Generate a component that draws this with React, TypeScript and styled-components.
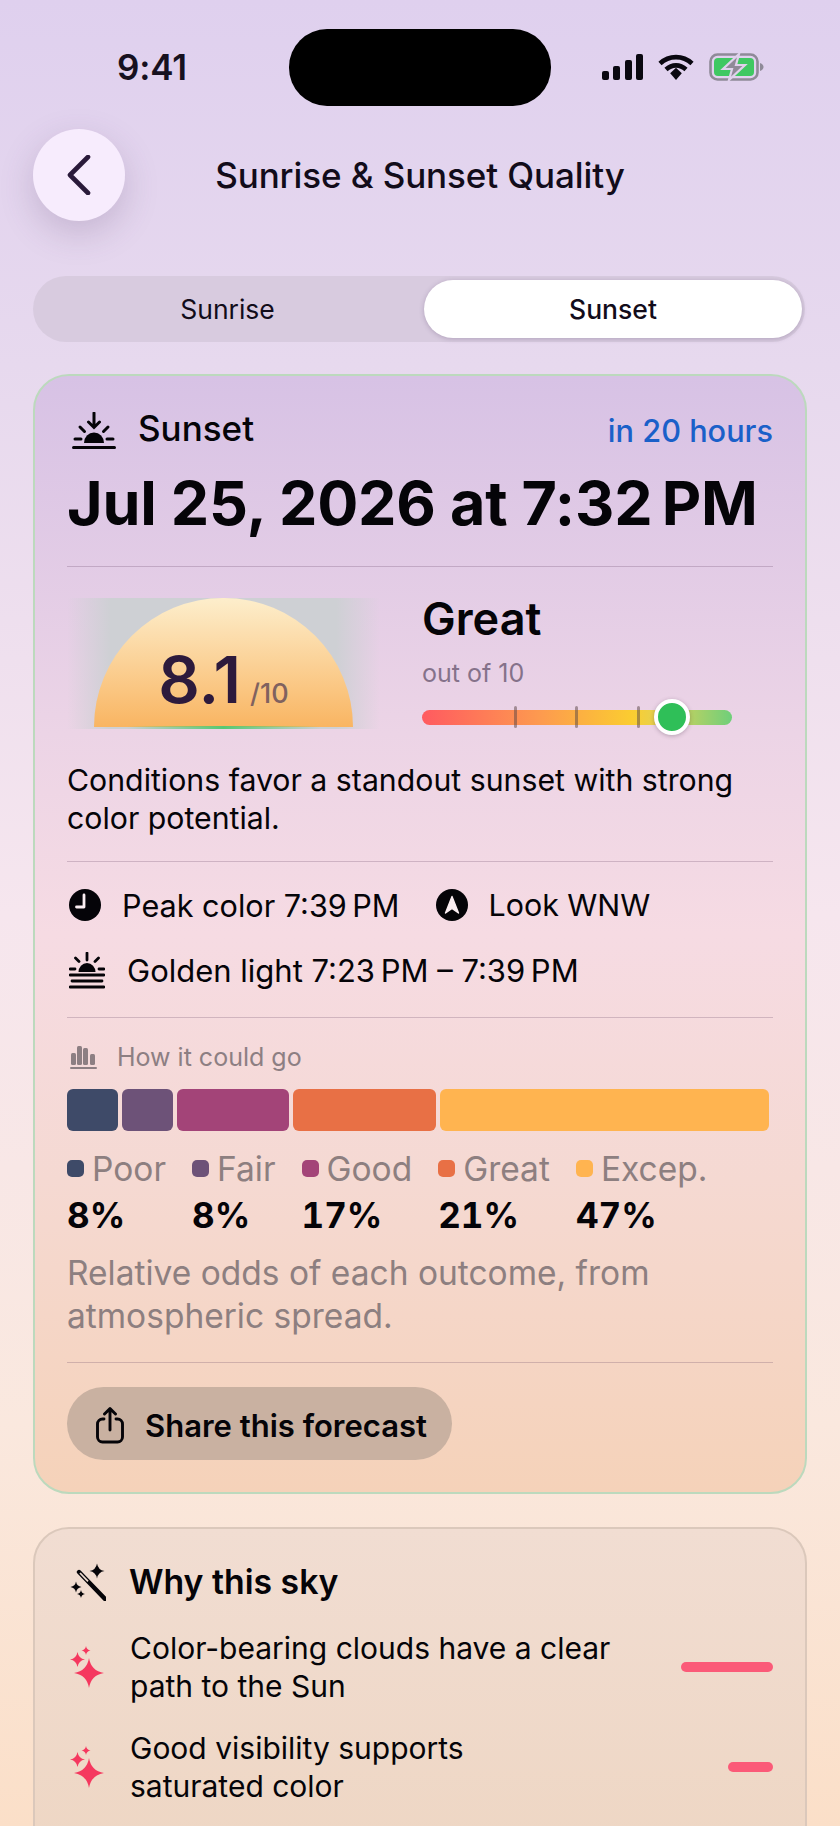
import React from "react";
import styled, { createGlobalStyle } from "styled-components";

const Global = createGlobalStyle`
  html, body { margin: 0; padding: 0; }
  body { font-family: Inter, "Liberation Sans", sans-serif; color: #050408; }
`;

const Page = styled.div`
  width: 840px;
  height: 1826px;
  overflow: hidden;
  background: linear-gradient(180deg, #dfd0ee 0%, #e7d9ee 20%, #f6e6ee 50%, #fae8de 78%, #fbdfc8 100%);
`;

const StatusBar = styled.div`
  display: grid;
  grid-template-columns: 1fr 262px 1fr;
  align-items: center;
  padding-top: 29px;
  height: 77px;
`;

const Time = styled.div`
  font-size: 35px;
  font-weight: 600;
  letter-spacing: -0.2px;
  color: #17111f;
  padding-left: 117px;
  margin-top: -2px;
`;

const Island = styled.div`
  height: 77px;
  border-radius: 38px;
  background: #000;
`;

const StatusIcons = styled.div`
  display: flex;
  align-items: center;
  gap: 15px;
  padding-left: 51px;
  margin-top: -1px;
`;

const Header = styled.div`
  display: grid;
  grid-template-columns: 92px 1fr 92px;
  align-items: center;
  margin: 23px 33px 0;
`;

const BackButton = styled.div`
  width: 92px;
  height: 92px;
  border-radius: 50%;
  background: #f7ecfd;
  display: flex;
  align-items: center;
  justify-content: center;
  box-shadow: 0 12px 34px rgba(90, 70, 110, 0.22);
`;

const Title = styled.div`
  text-align: center;
  font-size: 35px;
  font-weight: 500;
  letter-spacing: -0.1px;
  color: #120c1a;
`;

const Segments = styled.div`
  display: grid;
  grid-template-columns: 1fr 378px;
  align-items: center;
  height: 66px;
  margin: 55px 35px 0 33px;
  padding-right: 3px;
  border-radius: 33px;
  background: #d8cbdf;
`;

const Segment = styled.div<{ $active?: boolean }>`
  height: 58px;
  display: flex;
  align-items: center;
  justify-content: center;
  border-radius: 29px;
  font-size: 26.5px;
  font-weight: ${(p) => (p.$active ? 500 : 400)};
  color: #120c1a;
  background: ${(p) => (p.$active ? "#ffffff" : "transparent")};
  box-shadow: ${(p) => (p.$active ? "0 1px 5px rgba(90,70,110,.3)" : "none")};
  padding-right: ${(p) => (p.$active ? 0 : 2)}px;
`;

const Card = styled.div`
  margin: 32px 33px 0;
  padding: 34px 32px 32px;
  border: 2px solid #bcd9bd;
  border-radius: 36px;
  background: linear-gradient(180deg, #d7c2e5 0%, #ecd4e6 32%, #f6dbe3 50%, #f5d9d2 72%, #f5d2b9 100%);
`;

const CardHead = styled.div`
  display: flex;
  align-items: center;
  height: 40px;
`;

const HeadIcon = styled.div`
  width: 71px;
  padding-left: 5px;
  box-sizing: border-box;
  display: flex;
`;

const HeadLabel = styled.div`
  flex: 1;
  font-size: 35px;
  font-weight: 500;
  margin-top: -5px;
`;

const When = styled.div`
  font-size: 30.7px;
  font-weight: 500;
  color: #1a60c9;
`;

const DateLine = styled.div`
  margin-top: 17px;
  font-size: 61px;
  line-height: 72px;
  font-weight: 700;
  letter-spacing: -0.2px;
  white-space: nowrap;
`;

const Rule = styled.div<{ $top: number }>`
  height: 1px;
  margin-top: ${(p) => p.$top}px;
  background: rgba(90, 60, 90, 0.24);
`;

const ScoreRow = styled.div`
  display: flex;
  gap: 42px;
  margin-top: 31px;
`;

const Gauge = styled.div`
  position: relative;
  width: 313px;
  height: 131px;
  flex: none;
  display: flex;
  justify-content: center;
  align-items: flex-start;
  background: linear-gradient(90deg, rgba(206,208,212,0) 0%, #ced0d4 14%, #ced0d4 86%, rgba(206,208,212,0) 100%);
`;

const Dome = styled.div`
  width: 259px;
  height: 129px;
  border-radius: 130px 130px 0 0;
  background: linear-gradient(180deg, #fdeecc 0%, #f9b562 100%);
  display: flex;
  align-items: baseline;
  justify-content: center;
  gap: 9px;
  padding-top: 46px;
  box-sizing: border-box;
`;

const ScoreValue = styled.span`
  font-size: 65px;
  line-height: 72px;
  font-weight: 600;
  color: #2d1a3c;
`;

const ScoreMax = styled.span`
  font-size: 27px;
  font-weight: 500;
  color: #80625f;
`;

const GaugeGlow = styled.div`
  position: absolute;
  left: 60px;
  right: 60px;
  bottom: 0;
  height: 3px;
  background: linear-gradient(90deg, rgba(80,200,110,0), #56c873 50%, rgba(80,200,110,0));
`;

const ScoreSide = styled.div`
  display: flex;
  flex-direction: column;
  width: 310px;
`;

const Verdict = styled.div`
  font-size: 45px;
  line-height: 42px;
  font-weight: 600;
`;

const OutOf = styled.div`
  margin-top: 18px;
  font-size: 25px;
  line-height: 30px;
  color: #85728a;
`;

const Meter = styled.div`
  position: relative;
  height: 36px;
  margin-top: 11px;
  display: flex;
  align-items: center;
`;

const MeterTrack = styled.div`
  width: 100%;
  height: 15px;
  border-radius: 8px;
  background: linear-gradient(90deg, #ff5a60 0%, #fd9a4f 38%, #fbcd30 68%, #e0d258 78%, #6fcf7a 100%);
`;

const Tick = styled.div<{ $left: number }>`
  position: absolute;
  left: ${(p) => p.$left}px;
  top: 7px;
  width: 3px;
  height: 22px;
  border-radius: 2px;
  background: rgba(90, 70, 70, 0.5);
`;

const Thumb = styled.div`
  position: absolute;
  left: 232px;
  top: 0;
  width: 36px;
  height: 36px;
  box-sizing: border-box;
  border-radius: 50%;
  border: 4px solid #fff;
  background: #2fbf58;
  box-shadow: 0 1px 4px rgba(60, 40, 60, 0.3);
`;

const Summary = styled.div`
  margin-top: 26px;
  font-size: 30.25px;
  line-height: 38px;
`;

const FactRow = styled.div<{ $top: number }>`
  display: flex;
  align-items: center;
  height: 40px;
  margin-top: ${(p) => p.$top}px;
`;

const Fact = styled.div<{ $gap: number; $size: number; $end?: number }>`
  display: flex;
  align-items: center;
  gap: ${(p) => p.$gap}px;
  font-size: ${(p) => p.$size}px;
  white-space: nowrap;
  margin-right: ${(p) => p.$end ?? 0}px;
  padding-left: 2px;
`;

const OddsHead = styled.div`
  display: flex;
  align-items: center;
  gap: 20px;
  height: 30px;
  margin-top: 24px;
  padding-left: 3px;
  font-size: 25px;
  color: #8d7f83;
`;

const OddsBar = styled.div`
  display: flex;
  gap: 4px;
  width: 702px;
  height: 42px;
  margin-top: 17px;
`;

const OddsSegment = styled.div<{ $w: number; $c: string }>`
  flex: ${(p) => p.$w} 1 0;
  border-radius: 6px;
  background: ${(p) => p.$c};
`;

const Legend = styled.div`
  display: flex;
  gap: 26px;
  margin-top: 18px;
`;

const LegendItem = styled.div`
  display: flex;
  flex-direction: column;
`;

const LegendName = styled.div`
  display: flex;
  align-items: center;
  gap: 8px;
  height: 40px;
  font-size: 33.5px;
  color: #8d7f80;
`;

const Swatch = styled.span<{ $c: string }>`
  width: 17px;
  height: 17px;
  border-radius: 5px;
  background: ${(p) => p.$c};
  margin-top: -2px;
`;

const LegendPct = styled.div`
  margin-top: 8px;
  font-size: 35px;
  line-height: 36px;
  font-weight: 700;
  font-variant-numeric: tabular-nums;
`;

const Note = styled.div`
  margin-top: 19px;
  font-size: 33.5px;
  line-height: 43px;
  color: #8d7f80;
`;

const ShareButton = styled.div`
  display: inline-flex;
  align-items: center;
  gap: 21px;
  box-sizing: border-box;
  height: 73px;
  margin-top: 24px;
  padding: 4px 25px 0 29px;
  border-radius: 37px;
  background: #c9b1a1;
  font-size: 31px;
  font-weight: 600;
`;

const WhyCard = styled.div`
  margin: 33px 33px 0;
  padding: 34px 32px 60px;
  border: 2px solid #dbc8bb;
  border-radius: 36px;
  background: linear-gradient(180deg, #f1ddd2 0%, #eed6c3 100%);
`;

const WhyHead = styled.div`
  display: flex;
  align-items: center;
  gap: 23px;
  height: 37px;
  padding-left: 3px;
  font-size: 33.8px;
  font-weight: 600;
`;

const WhyRow = styled.div<{ $top: number }>`
  display: grid;
  grid-template-columns: 63px 1fr auto;
  align-items: center;
  margin-top: ${(p) => p.$top}px;
`;

const WhyIcon = styled.div`
  display: flex;
  padding-left: 3px;
`;

const WhyText = styled.div`
  font-size: 30px;
  line-height: 38px;
`;

const Impact = styled.div<{ $w: number }>`
  width: ${(p) => p.$w}px;
  height: 10px;
  border-radius: 5px;
  background: #fb5a78;
`;

const star = (cx: number, cy: number, r: number) =>
  `M${cx} ${cy - r}Q${cx + r * 0.14} ${cy - r * 0.14} ${cx + r} ${cy}Q${cx + r * 0.14} ${cy + r * 0.14} ${cx} ${cy + r}Q${cx - r * 0.14} ${cy + r * 0.14} ${cx - r} ${cy}Q${cx - r * 0.14} ${cy - r * 0.14} ${cx} ${cy - r}Z`;

const Signal = () => (
  <svg width="41" height="26" viewBox="0 0 41 26" fill="#0a0810">
    <rect x="0" y="17" width="7" height="9" rx="2" />
    <rect x="11" y="12" width="7" height="14" rx="2" />
    <rect x="23" y="6" width="7" height="20" rx="2" />
    <rect x="34" y="0" width="7" height="26" rx="2" />
  </svg>
);

const Wifi = () => (
  <svg width="36" height="26" viewBox="0 0 36 26" fill="none" stroke="#0a0810" strokeWidth="4.6">
    <path d="M2 9.5C11 1 25 1 34 9.5" />
    <path d="M8 15.5C14 10 22 10 28 15.5" />
    <path d="M12.2 19.2L18 13.8l5.8 5.4L18 26z" fill="#0a0810" stroke="none" />
  </svg>
);

const Battery = () => (
  <svg width="55" height="28" viewBox="0 0 55 28">
    <rect x="1.5" y="1.5" width="47" height="25" rx="7" fill="none" stroke="#8f8a98" strokeWidth="2.6" />
    <rect x="5" y="5" width="40" height="18" rx="4" fill="#3fc862" />
    <path d="M51 10c2.5 .8 3.5 2.4 3.5 4s-1 3.2-3.5 4z" fill="#8f8a98" />
    <path d="M30 1L14 16h9l-3 11 16-15h-9z" fill="#8f8a98" stroke="#e0d1ec" strokeWidth="2.2" />
  </svg>
);

const Chevron = () => (
  <svg width="26" height="40" viewBox="0 0 26 40" fill="none" stroke="#2a1a3a" strokeWidth="4.6" strokeLinecap="round" strokeLinejoin="round">
    <path d="M22 2L4 20l18 18" />
  </svg>
);

const SunsetGlyph = () => (
  <svg width="44" height="37" viewBox="0 0 44 37" fill="none" stroke="#050408" strokeWidth="3" strokeLinecap="round">
    <path d="M22 1v14M16.5 10l5.5 5.5 5.5-5.5" />
    <path d="M8 15l4.5 4.5M36 15l-4.5 4.5M3 27h6M35 27h6" />
    <path d="M12 31a10 10.5 0 0 1 20 0z" fill="#050408" stroke="none" />
    <path d="M1.5 35.5h41" />
  </svg>
);

const ClockGlyph = () => (
  <svg width="32" height="32" viewBox="0 0 32 32">
    <circle cx="16" cy="16" r="16" fill="#050408" />
    <path d="M15 6v12H7.5" fill="none" stroke="#fbeef2" strokeWidth="2.8" strokeLinecap="round" strokeLinejoin="round" />
  </svg>
);

const ArrowGlyph = () => (
  <svg width="32" height="32" viewBox="0 0 32 32">
    <circle cx="16" cy="16" r="16" fill="#050408" />
    <path d="M16 7.5L22.5 24 16 19.5 9.5 24z" fill="#fbeef2" stroke="#fbeef2" strokeWidth="1.4" strokeLinejoin="round" />
  </svg>
);

const GoldenGlyph = () => (
  <svg width="36" height="37" viewBox="0 0 36 37" fill="none" stroke="#050408" strokeWidth="2.8" strokeLinecap="round">
    <path d="M18 1v7M6.5 6l3.5 3.5M29.5 6L26 9.5M1 17h5M30 17h5" />
    <path d="M9.5 20a8.5 9 0 0 1 17 0z" fill="#050408" stroke="none" />
    <path d="M1 23h34M3 29h30M1 35h34" />
  </svg>
);

const ChartGlyph = () => (
  <svg width="27" height="24" viewBox="0 0 27 24" fill="#8d7f83">
    <rect x="1" y="8" width="5" height="12" rx="1.5" />
    <rect x="7" y="1" width="5" height="19" rx="1.5" />
    <rect x="13" y="3" width="5" height="17" rx="1.5" />
    <rect x="20" y="9" width="5" height="11" rx="1.5" />
    <rect x="0" y="22" width="27" height="2" rx="1" />
  </svg>
);

const ShareGlyph = () => (
  <svg width="28" height="37" viewBox="0 0 28 37" fill="none" stroke="#050408" strokeWidth="2.9" strokeLinecap="round" strokeLinejoin="round">
    <path d="M14 23V2M8.5 7L14 1.6 19.5 7" />
    <path d="M8 12H6.5a5 5 0 0 0-5 5v13a5 5 0 0 0 5 5h15a5 5 0 0 0 5-5V17a5 5 0 0 0-5-5H20" />
  </svg>
);

const WandGlyph = () => (
  <svg width="36" height="38" viewBox="0 0 36 38">
    <path d="M9 9l26 27" stroke="#050408" strokeWidth="4.4" strokeLinecap="round" />
    <path d="M10 10l8 8.4" stroke="#efdbd0" strokeWidth="1.8" />
    <path d={star(27, 8, 7.5)} fill="#050408" />
    <path d={star(6, 24, 5.5)} fill="#050408" />
    <path d={star(11, 31, 4)} fill="#050408" />
  </svg>
);

const SparkleGlyph = () => (
  <svg width="34" height="42" viewBox="0 0 34 42" fill="#f5385f">
    <path d={star(19, 27, 15)} />
    <path d={star(7.5, 13.5, 7.5)} />
    <path d={star(16, 4.5, 4.5)} />
  </svg>
);

const odds = [
  { name: "Poor", pct: "8%", c: "#3e4a68", w: 51 },
  { name: "Fair", pct: "8%", c: "#6d5278", w: 51 },
  { name: "Good", pct: "17%", c: "#a34478", w: 112 },
  { name: "Great", pct: "21%", c: "#e87045", w: 142 },
  { name: "Excep.", pct: "47%", c: "#ffb450", w: 329 },
];

export default function App() {
  return (
    <Page>
      <Global />
      <StatusBar>
        <Time>9:41</Time>
        <Island />
        <StatusIcons>
          <Signal />
          <Wifi />
          <Battery />
        </StatusIcons>
      </StatusBar>
      <Header>
        <BackButton>
          <Chevron />
        </BackButton>
        <Title>Sunrise &amp; Sunset Quality</Title>
      </Header>
      <Segments>
        <Segment>Sunrise</Segment>
        <Segment $active>Sunset</Segment>
      </Segments>
      <Card>
        <CardHead>
          <HeadIcon>
            <SunsetGlyph />
          </HeadIcon>
          <HeadLabel>Sunset</HeadLabel>
          <When>in 20 hours</When>
        </CardHead>
        <DateLine>Jul 25, 2026 at 7:32{"\u202F"}PM</DateLine>
        <Rule $top={27} />
        <ScoreRow>
          <Gauge>
            <Dome>
              <ScoreValue>8.1</ScoreValue>
              <ScoreMax>/10</ScoreMax>
            </Dome>
            <GaugeGlow />
          </Gauge>
          <ScoreSide>
            <Verdict>Great</Verdict>
            <OutOf>out of 10</OutOf>
            <Meter>
              <MeterTrack />
              <Tick $left={92} />
              <Tick $left={153} />
              <Tick $left={215} />
              <Thumb />
            </Meter>
          </ScoreSide>
        </ScoreRow>
        <Summary>
          Conditions favor a standout sunset with strong
          <br />
          color potential.
        </Summary>
        <Rule $top={24} />
        <FactRow $top={23}>
          <Fact $gap={21} $size={30.6} $end={34}>
            <ClockGlyph />
            Peak color 7:39{"\u202F"}PM
          </Fact>
          <Fact $gap={21} $size={30.4}>
            <ArrowGlyph />
            Look WNW
          </Fact>
        </FactRow>
        <FactRow $top={25}>
          <Fact $gap={22} $size={31}>
            <GoldenGlyph />
            Golden light 7:23{"\u202F"}PM – 7:39{"\u202F"}PM
          </Fact>
        </FactRow>
        <Rule $top={27} />
        <OddsHead>
          <ChartGlyph />
          How it could go
        </OddsHead>
        <OddsBar>
          {odds.map((o) => (
            <OddsSegment key={o.name} $w={o.w} $c={o.c} />
          ))}
        </OddsBar>
        <Legend>
          {odds.map((o) => (
            <LegendItem key={o.name}>
              <LegendName>
                <Swatch $c={o.c} />
                {o.name}
              </LegendName>
              <LegendPct>{o.pct}</LegendPct>
            </LegendItem>
          ))}
        </Legend>
        <Note>
          Relative odds of each outcome, from
          <br />
          atmospheric spread.
        </Note>
        <Rule $top={24} />
        <ShareButton>
          <ShareGlyph />
          Share this forecast
        </ShareButton>
      </Card>
      <WhyCard>
        <WhyHead>
          <WandGlyph />
          Why this sky
        </WhyHead>
        <WhyRow $top={29}>
          <WhyIcon>
            <SparkleGlyph />
          </WhyIcon>
          <WhyText>
            Color-bearing clouds have a clear
            <br />
            path to the Sun
          </WhyText>
          <Impact $w={92} />
        </WhyRow>
        <WhyRow $top={24}>
          <WhyIcon>
            <SparkleGlyph />
          </WhyIcon>
          <WhyText>
            Good visibility supports
            <br />
            saturated color
          </WhyText>
          <Impact $w={45} />
        </WhyRow>
      </WhyCard>
    </Page>
  );
}
